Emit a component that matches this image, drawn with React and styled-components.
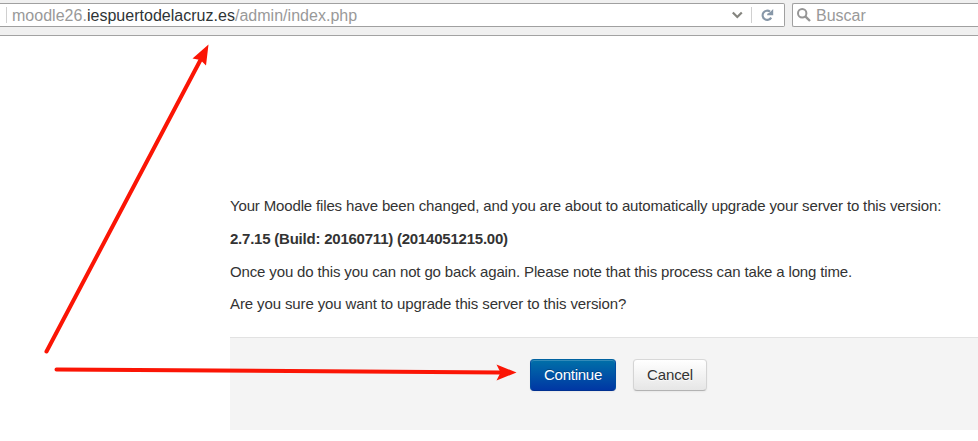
import React from "react";
import styled, { createGlobalStyle } from "styled-components";

const GlobalStyle = createGlobalStyle`
  html, body { margin: 0; padding: 0; background: #fff; overflow: hidden; }
  * { box-sizing: border-box; }
`;

const Page = styled.div`
  position: relative;
  width: 978px;
  height: 441px;
  overflow: hidden;
  display: flex;
  flex-direction: column;
  background: #fff;
  font-family: "Liberation Sans", Arial, sans-serif;
  color: #333;
`;

const Toolbar = styled.header`
  flex: none;
  display: flex;
  align-items: flex-start;
  gap: 7px;
  height: 36px;
  padding-top: 3px;
  background: #f0f0f0;
  border-bottom: 1px solid #a2a2a2;
`;

const Field = styled.div`
  display: flex;
  align-items: center;
  height: 24px;
  background: #fff;
  border: 1px solid #a0a0a0;
  font-size: 16px;
  line-height: 20px;
  white-space: nowrap;
  color: #999;
`;

const AddressField = styled(Field)`
  width: 785px;
  border-left: 0;
  border-radius: 0 2px 2px 0;
  padding-left: 6px;
`;

const SearchField = styled(Field)`
  flex: 1;
  border-right: 0;
  border-radius: 2px 0 0 2px;
  padding-left: 3px;
`;

const Placeholder = styled.span`
  padding-top: 2px;
`;

const Divider = styled.span`
  width: 1px;
  height: 16px;
  background: #d0d0d0;
`;

const Address = styled.span`
  flex: 1;
  padding: 2px 0 0 5px;
  letter-spacing: 0.02px;
`;

const Host = styled.span`
  color: #2e3436;
`;

const Icon = styled.svg`
  flex: none;
  display: block;
  margin: ${(p) => p.$margin || 0};
`;

const Notice = styled.main`
  flex: none;
  margin-left: 230px;
  height: 301px;
  padding-top: 160px;
`;

const Paragraph = styled.p`
  margin: 0 0 ${(p) => p.$gap || "13px"};
  height: 20px;
  font-size: 15px;
  line-height: 20px;
  white-space: nowrap;
  font-weight: ${(p) => (p.$strong ? 700 : 400)};
  letter-spacing: ${(p) => p.$tracking || 0};
`;

const Actions = styled.div`
  flex: none;
  display: flex;
  align-items: flex-start;
  gap: 17px;
  margin-left: 230px;
  height: 93px;
  padding: 21px 0 0 300px;
  background: #f4f4f4;
  border-top: 1px solid #e2e2e2;
`;

const Button = styled.button`
  width: ${(p) => p.$width};
  height: 32px;
  padding: 0;
  font: 15px/20px "Liberation Sans", Arial, sans-serif;
  letter-spacing: ${(p) => p.$tracking || 0};
  border: 1px solid;
  border-radius: 4px;
  color: ${(p) => (p.$primary ? "#fff" : "#333")};
  border-color: ${(p) =>
    p.$primary ? "#0062a0 #004ba0 #003090" : "#d8d8d8 #d4d4d4 #b3b3b3"};
  background: ${(p) =>
    p.$primary
      ? "linear-gradient(#0070a8, #0037a4)"
      : "linear-gradient(#fff, #e6e6e6)"};
  text-shadow: ${(p) =>
    p.$primary ? "0 -1px 0 rgba(0,0,0,.25)" : "0 1px 1px rgba(255,255,255,.75)"};
  box-shadow: inset 0 1px 0 rgba(255,255,255,.2), 0 1px 2px rgba(0,0,0,.05);
`;

const Annotations = styled.svg`
  position: absolute;
  inset: 0;
  pointer-events: none;
`;

export default function App() {
  return (
    <Page>
      <GlobalStyle />
      <Toolbar>
        <AddressField>
          <Divider />
          <Address>
            moodle26.<Host>iespuertodelacruz.es</Host>/admin/index.php
          </Address>
          <Icon $margin="0 8px 0 0" width="12" height="10" viewBox="0 0 12 10">
            <path d="M1.8 2.5 6.3 7 10.8 2.5" fill="none" stroke="#85857f" strokeWidth="2.2" />
          </Icon>
          <Divider />
          <Icon $margin="0 10px 0 9px" width="13" height="12" viewBox="0 0 13 12">
            <path d="M10.2 8.6A4.6 4.6 0 1 1 9 2.6" fill="none" stroke="#8797a8" strokeWidth="2.1" />
            <path d="M12.2 0V6.2H6.2V4.8L8.4 3.8Z" fill="#8797a8" />
          </Icon>
        </AddressField>
        <SearchField>
          <Icon $margin="0 5px 0 1px" width="14" height="14" viewBox="0 0 14 14">
            <circle cx="5.2" cy="5.2" r="4.2" fill="none" stroke="#969696" strokeWidth="2" />
            <path d="M8.3 8.3 13 13" stroke="#969696" strokeWidth="2.4" />
          </Icon>
          <Placeholder>Buscar</Placeholder>
        </SearchField>
      </Toolbar>
      <Notice>
        <Paragraph $tracking="-0.15px">
          Your Moodle files have been changed, and you are about to automatically upgrade your server to this version:
        </Paragraph>
        <Paragraph $strong $tracking="-0.225px">
          2.7.15 (Build: 20160711) (2014051215.00)
        </Paragraph>
        <Paragraph $gap="12px" $tracking="-0.14px">
          Once you do this you can not go back again. Please note that this process can take a long time.
        </Paragraph>
        <Paragraph $tracking="-0.12px">
          Are you sure you want to upgrade this server to this version?
        </Paragraph>
      </Notice>
      <Actions>
        <Button $primary $width="86px" $tracking="-0.25px">Continue</Button>
        <Button $width="74px" $tracking="-0.1px">Cancel</Button>
      </Actions>
      <Annotations width="978" height="441" viewBox="0 0 978 441">
        <g stroke="#fb1505" strokeWidth="4" strokeLinecap="round">
          <path d="M46.5 351.5 201 59" />
          <path d="M56.5 369.5 500 372.5" />
        </g>
        <g fill="#fb1505">
          <path d="M208.5 44.5 192.5 58.5 200.5 60 206 65.5Z" />
          <path d="M516.5 372.5 496.5 364.5 500.5 372.5 496.5 380.5Z" />
        </g>
      </Annotations>
    </Page>
  );
}
